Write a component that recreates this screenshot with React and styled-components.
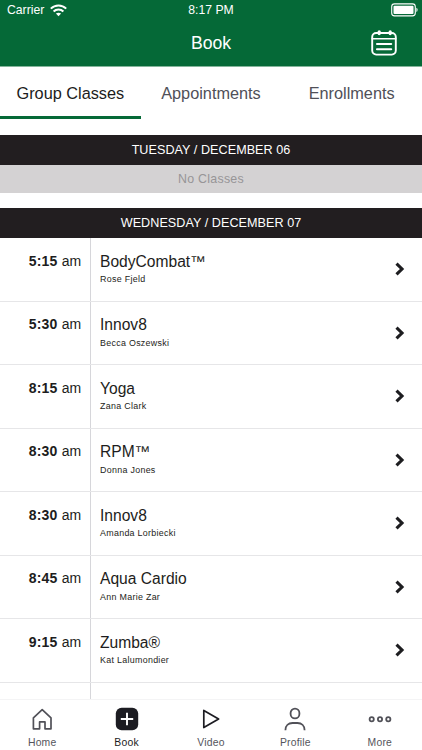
import React, { useState } from 'react';
import styled, { createGlobalStyle } from 'styled-components';

const GlobalStyle = createGlobalStyle`
  * {
    box-sizing: border-box;
  }

  body {
    margin: 0;
    background: #fff;
    font-family: 'Liberation Sans', Arial, Helvetica, sans-serif;
    overflow: hidden;
  }

  svg {
    display: block;
  }
`;

const tabs = ['Group Classes', 'Appointments', 'Enrollments'];

const classes = [
  { time: '5:15', name: 'BodyCombat™', instructor: 'Rose Fjeld' },
  { time: '5:30', name: 'Innov8', instructor: 'Becca Oszewski' },
  { time: '8:15', name: 'Yoga', instructor: 'Zana Clark' },
  { time: '8:30', name: 'RPM™', instructor: 'Donna Jones' },
  { time: '8:30', name: 'Innov8', instructor: 'Amanda Lorbiecki' },
  { time: '8:45', name: 'Aqua Cardio', instructor: 'Ann Marie Zar' },
  { time: '9:15', name: 'Zumba®', instructor: 'Kat Lalumondier' },
];

const WifiIcon = () => (
  <svg width="17" height="13" viewBox="0 0 17 13" fill="none" stroke="#fff" strokeWidth="2">
    <path d="M0.8 4.6C5 0.3 12 0.3 16.2 4.6" />
    <path d="M3.6 7.5C6.3 4.8 10.7 4.8 13.4 7.5" />
    <path d="M8.5 12.2L5.9 9.6C7.3 8.3 9.7 8.3 11.1 9.6Z" fill="#fff" stroke="none" />
  </svg>
);

const BatteryIcon = () => (
  <svg width="27" height="14" viewBox="0 0 27 14">
    <rect x="0.7" y="0.9" width="23.6" height="12" rx="2.8" fill="none" stroke="#fff" strokeWidth="1.1" />
    <rect x="2.5" y="2.7" width="20" height="8.4" rx="1" fill="#fff" />
    <path d="M25.4 4.8C27 5.4 27 8.4 25.4 9Z" fill="#fff" />
  </svg>
);

const CalendarIcon = () => (
  <svg width="26" height="26" viewBox="0 0 26 26" fill="none" stroke="#fff" strokeLinecap="round">
    <rect x="1.2" y="3" width="23.6" height="21.6" rx="4" strokeWidth="1.9" />
    <path d="M1.2 8.7H24.8" strokeWidth="1.6" />
    <path d="M8.2 1.8V3.6M19.2 1.8V3.6" strokeWidth="3.2" />
    <path d="M6 14H20.2M6 19.2H20.2" strokeWidth="2.1" />
  </svg>
);

const ChevronIcon = () => (
  <svg width="10" height="14" viewBox="0 0 10 14" fill="none" stroke="#1d1d20" strokeWidth="3.1">
    <path d="M1.5 1.6L7 7L1.5 12.4" />
  </svg>
);

const HomeIcon = () => (
  <svg width="24" height="24" viewBox="0 0 24 24" fill="none" stroke="#515158" strokeWidth="1.7">
    <path d="M3.4 10.8L12.2 2.6L21 10.8V21.8H15V14.9H9.6V21.8H3.4Z" strokeLinejoin="round" />
  </svg>
);

const BookIcon = () => (
  <svg width="24" height="24" viewBox="0 0 24 24">
    <rect x="0.8" y="0.8" width="22.4" height="22.4" rx="5.8" fill="#1c1c22" />
    <path d="M12 5.8V18.2M5.8 12H18.2" stroke="#fff" strokeWidth="1.9" />
  </svg>
);

const VideoIcon = () => (
  <svg width="24" height="24" viewBox="0 0 24 24" fill="none" stroke="#1c1c22" strokeWidth="1.7">
    <path d="M4.8 3.4L19.6 12L4.8 20.6Z" strokeLinejoin="round" />
  </svg>
);

const ProfileIcon = () => (
  <svg width="24" height="24" viewBox="0 0 24 24" fill="none" stroke="#515158" strokeWidth="1.8">
    <rect x="7.6" y="1.6" width="8.8" height="9.8" rx="4.4" />
    <path d="M2.4 23.2C2.4 18.5 5.5 16 9.5 16H14.5C18.5 16 21.6 18.5 21.6 23.2" />
  </svg>
);

const MoreIcon = () => (
  <svg width="24" height="24" viewBox="0 0 24 24" fill="none" stroke="#515158" strokeWidth="1.8">
    <circle cx="3.7" cy="12.3" r="2.1" />
    <circle cx="12" cy="12.3" r="2.1" />
    <circle cx="20.3" cy="12.3" r="2.1" />
  </svg>
);

const navItems = [
  { label: 'Home', icon: HomeIcon },
  { label: 'Book', icon: BookIcon },
  { label: 'Video', icon: VideoIcon },
  { label: 'Profile', icon: ProfileIcon },
  { label: 'More', icon: MoreIcon },
];

const App = () => {
  const [activeTab, setActiveTab] = useState('Group Classes');
  const [activeNav, setActiveNav] = useState('Book');

  return (
    <Screen>
      <GlobalStyle />
      <Header>
        <StatusBar>
          <Carrier>
            Carrier
            <WifiIcon />
          </Carrier>
          <span>8:17 PM</span>
          <Battery>
            <BatteryIcon />
          </Battery>
        </StatusBar>
        <TitleBar>
          <Title>Book</Title>
          <CalendarButton aria-label="Calendar">
            <CalendarIcon />
          </CalendarButton>
        </TitleBar>
      </Header>

      <Tabs>
        {tabs.map((tab) => (
          <Tab key={tab} $active={tab === activeTab} onClick={() => setActiveTab(tab)}>
            {tab}
          </Tab>
        ))}
      </Tabs>

      <Schedule>
        <DayHeading>TUESDAY / DECEMBER 06</DayHeading>
        <EmptyDay>No Classes</EmptyDay>
        <DayHeading>WEDNESDAY / DECEMBER 07</DayHeading>
        {classes.map((item, index) => (
          <ClassRow key={index}>
            <Time>
              <strong>{item.time}</strong> am
            </Time>
            <Details>
              <ClassName>{item.name}</ClassName>
              <Instructor>{item.instructor}</Instructor>
            </Details>
            <Arrow>
              <ChevronIcon />
            </Arrow>
          </ClassRow>
        ))}
        <ClassRow>
          <Time />
          <Details />
        </ClassRow>
      </Schedule>

      <BottomNav>
        {navItems.map(({ label, icon: Icon }) => (
          <NavItem key={label} $active={label === activeNav} onClick={() => setActiveNav(label)}>
            <Icon />
            <span>{label}</span>
          </NavItem>
        ))}
      </BottomNav>
    </Screen>
  );
};

const Screen = styled.div`
  display: flex;
  flex-direction: column;
  width: 422px;
  height: 750px;
  background: #fff;
  overflow: hidden;
`;

const Header = styled.header`
  flex: none;
  height: 67px;
  border-bottom: 1px solid #84b59b;
  background: #056937;
  color: #fff;
`;

const StatusBar = styled.div`
  display: grid;
  grid-template-columns: 1fr auto 1fr;
  align-items: center;
  height: 20px;
  padding: 0 4px 0 7px;
  font-size: 12.2px;
  line-height: 14px;

  > span {
    margin: -1px 3px 0 0;
  }
`;

const Carrier = styled.div`
  display: flex;
  align-items: center;
  gap: 6px;
`;

const Battery = styled.div`
  display: flex;
  justify-content: flex-end;
`;

const TitleBar = styled.div`
  display: grid;
  grid-template-columns: 1fr auto 1fr;
  align-items: center;
  height: 46px;
`;

const Title = styled.h1`
  grid-column: 2;
  margin: 0;
  font-size: 17.6px;
  font-weight: 400;
`;

const CalendarButton = styled.button`
  justify-self: end;
  margin-right: 25px;
  padding: 0;
  border: none;
  background: none;
`;

const Tabs = styled.nav`
  display: grid;
  grid-template-columns: repeat(3, 1fr);
  flex: none;
  height: 52px;
`;

const Tab = styled.button`
  padding: 4px 0 0;
  border: none;
  border-bottom: 3px solid ${({ $active }) => ($active ? '#056937' : 'transparent')};
  background: none;
  color: ${({ $active }) => ($active ? '#1c1c20' : '#505058')};
  font-family: inherit;
  font-size: 16.3px;
`;

const Schedule = styled.main`
  flex: 1;
  min-height: 0;
  padding-top: 16px;
  overflow: hidden;
`;

const DayHeading = styled.h2`
  display: flex;
  align-items: center;
  justify-content: center;
  height: 30px;
  margin: 0;
  background: #221e20;
  color: #fff;
  font-size: 12.6px;
  font-weight: 400;
  letter-spacing: 0.05px;
`;

const EmptyDay = styled.div`
  display: flex;
  align-items: center;
  justify-content: center;
  height: 28px;
  margin-bottom: 15px;
  background: #d4d2d3;
  color: #979597;
  font-size: 12.4px;
  letter-spacing: 0.25px;
`;

const ClassRow = styled.div`
  display: grid;
  grid-template-columns: 91px 1fr auto;
  height: 63.5px;
  border-bottom: 1px solid #e6e6e8;
`;

const Time = styled.div`
  padding: 14.9px 8.5px 0 0;
  border-right: 1px solid #d6d6da;
  color: #1d1d20;
  font-size: 14px;
  line-height: 17px;
  letter-spacing: 0.2px;
  text-align: right;
`;

const Details = styled.div`
  padding: 13.9px 0 0 9px;
  color: #1d1d20;
`;

const ClassName = styled.div`
  font-size: 15.6px;
  line-height: 19px;
`;

const Instructor = styled.div`
  margin-top: 2.6px;
  font-size: 8.9px;
  line-height: 12px;
  letter-spacing: 0.3px;
`;

const Arrow = styled.div`
  align-self: center;
  padding-right: 17px;
`;

const BottomNav = styled.nav`
  display: grid;
  grid-template-columns: repeat(5, 1fr);
  flex: none;
  height: 51px;
  border-top: 1px solid #f4f4f5;
  background: #fff;
`;

const NavItem = styled.button`
  display: flex;
  flex-direction: column;
  align-items: center;
  gap: 6px;
  padding: 7px 0 0;
  border: none;
  background: none;
  color: ${({ $active }) => ($active ? '#1c1c22' : '#55555c')};
  font-family: inherit;
  font-size: 10.4px;
  line-height: 12px;
  letter-spacing: 0.2px;
`;

export default App;
